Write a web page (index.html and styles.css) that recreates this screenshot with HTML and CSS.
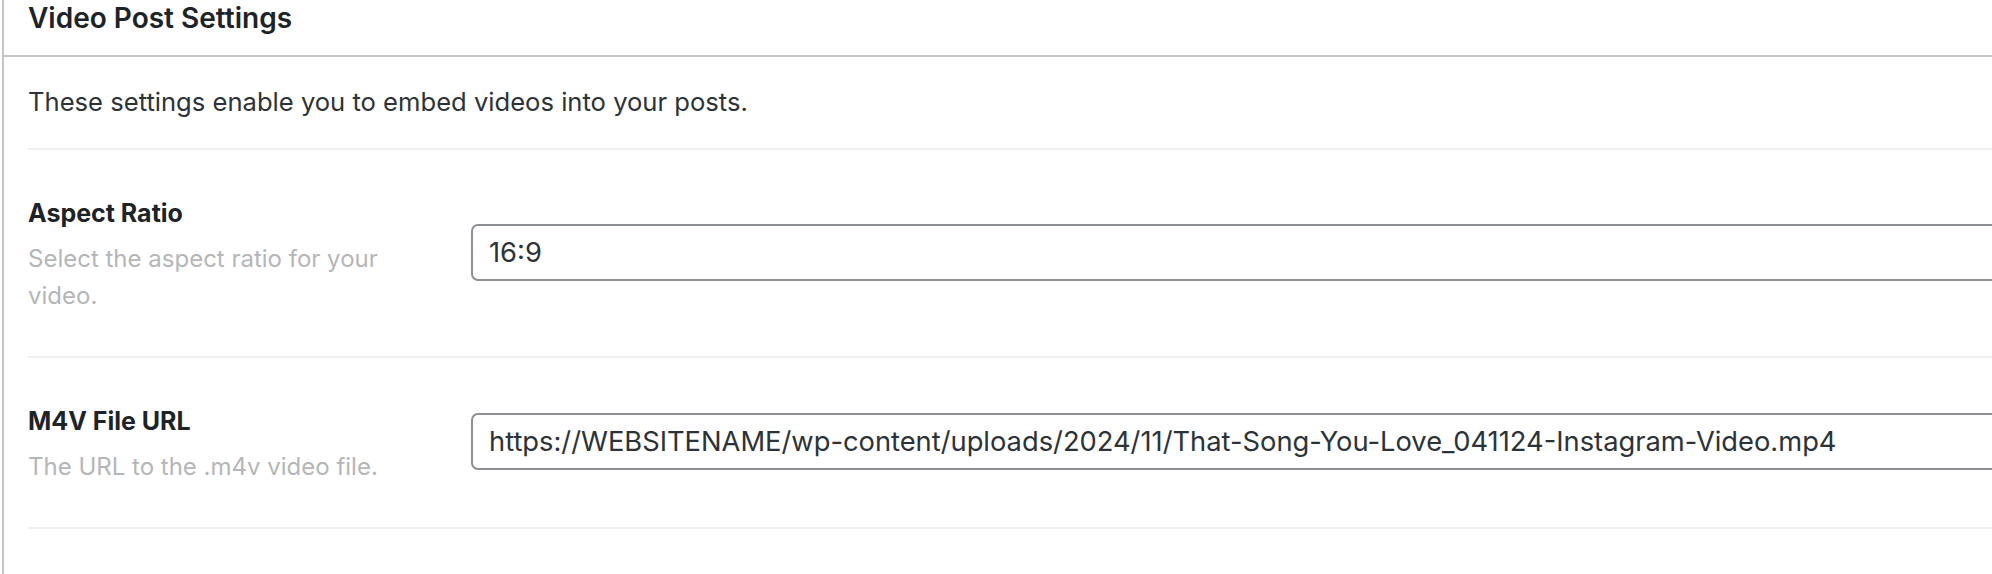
FILE: index.html
```html
<!DOCTYPE html>
<html lang="en">
<head>
<meta charset="utf-8">
<title>Video Post Settings</title>
<link rel="stylesheet" href="styles.css">
</head>
<body>
<div class="postbox">
  <div class="postbox-header">
    <h2 class="postbox-title">Video Post Settings</h2>
  </div>
  <div class="inside">
    <p class="intro">These settings enable you to embed videos into your posts.</p>
    <div class="field-row">
      <div class="field-label">
        <label class="label-title" for="aspect">Aspect Ratio</label>
        <p class="label-desc">Select the aspect ratio for your video.</p>
      </div>
      <div class="field-input">
        <input id="aspect" class="text-input" type="text" value="16:9">
      </div>
    </div>
    <div class="field-row">
      <div class="field-label">
        <label class="label-title" for="m4v">M4V File URL</label>
        <p class="label-desc">The URL to the .m4v video file.</p>
      </div>
      <div class="field-input">
        <input id="m4v" class="text-input" type="text" value="https://WEBSITENAME/wp-content/uploads/2024/11/That-Song-You-Love_041124-Instagram-Video.mp4">
      </div>
    </div>
  </div>
</div>
</body>
</html>
```

FILE: styles.css
```css
html, body {
  margin: 0;
  padding: 0;
  background: #ffffff;
  overflow: hidden;
}

body {
  font-family: Inter, "Noto Sans", "Liberation Sans", sans-serif;
  color: #1d2327;
}

.postbox {
  box-sizing: border-box;
  margin-left: 2px;
  width: 2400px;
  min-height: 100vh;
  border-left: 2px solid #c3c4c7;
  background: #ffffff;
}

.postbox-header {
  height: 55px;
  border-bottom: 2px solid #c3c4c7;
  padding-left: 24px;
  display: flex;
  align-items: flex-start;
}

.postbox-title {
  margin: 0;
  padding-top: 1px;
  font-size: 28px;
  line-height: 34px;
  font-weight: 600;
  color: #1d2327;
}

.inside {
  padding-left: 24px;
}

.intro {
  margin: 0;
  padding: 26px 0 28px;
  font-size: 25.6px;
  line-height: 37px;
  color: #2c3338;
  border-bottom: 2px solid #f0f0f1;
  width: 2000px;
}

.field-row {
  display: grid;
  grid-template-columns: 443px 1fr;
  align-items: center;
  padding: 46px 0 42px;
  border-bottom: 2px solid #f0f0f1;
}

.field-label {
  width: 380px;
}

.label-title {
  display: block;
  font-size: 25px;
  line-height: 34px;
  font-weight: 700;
  color: #1d2327;
}

.label-desc {
  margin: 10px 0 0;
  font-size: 24px;
  line-height: 37px;
  color: #b4b6b8;
}

.field-input {
  padding-bottom: 6px;
}

.text-input {
  display: block;
  box-sizing: border-box;
  width: 100%;
  height: 57px;
  margin: 0;
  padding: 0 16px;
  border: 2px solid #8c8f94;
  border-radius: 7px;
  background: #ffffff;
  font-family: Inter, "Noto Sans", "Liberation Sans", sans-serif;
  font-size: 27.3px;
  color: #2c3338;
  outline: none;
}
```
